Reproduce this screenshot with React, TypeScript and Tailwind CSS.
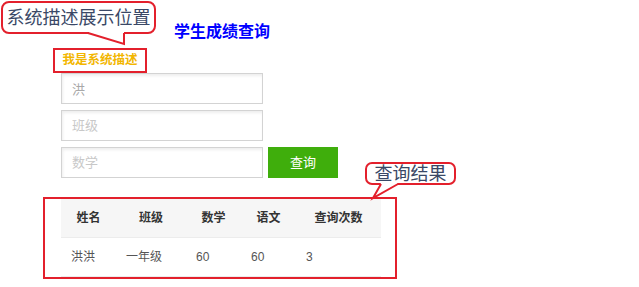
export default function App() {
  const cols = [
    { name: '姓名', w: 'w-[55px]' },
    { name: '班级', w: 'w-[70px]' },
    { name: '数学', w: 'w-[55px]' },
    { name: '语文', w: 'w-[55px]' },
    { name: '查询次数', w: 'w-[85px]' },
  ];
  const row = ['洪洪', '一年级', '60', '60', '3'];

  return (
    <div
      className="relative w-[639px] h-[287px] overflow-hidden bg-white"
      style={{ fontFamily: '"Liberation Sans", "Noto Sans CJK SC", sans-serif' }}
    >
      <div className="pt-[22px]">
        {/* page title */}
        <h1 className="ml-[174px] text-[16px] leading-[20px] font-bold text-[#0000ff]">学生成绩查询</h1>

        {/* system description (annotated) */}
        <div className="mt-[6px] ml-[53px] w-[94px] h-[25px] border-2 border-[#e3202c] flex items-center justify-center">
          <span className="text-[12.5px] leading-none font-bold text-[#f2b600]">我是系统描述</span>
        </div>

        {/* query form */}
        <div className="ml-[61px] flex flex-col gap-[6px]">
          <input
            defaultValue="洪"
            className="w-[202px] h-[31px] border border-[#d3d3d3] px-[10px] text-[13px] text-[#a8a8a8] outline-none shadow-[inset_1px_2px_3px_rgba(0,0,0,0.07)]"
          />
          <input
            placeholder="班级"
            className="w-[202px] h-[31px] border border-[#d3d3d3] px-[10px] text-[13px] placeholder:text-[#c8c8c8] outline-none shadow-[inset_1px_2px_3px_rgba(0,0,0,0.07)]"
          />
          <div className="flex">
            <input
              placeholder="数学"
              className="w-[202px] h-[31px] border border-[#d3d3d3] px-[10px] text-[13px] placeholder:text-[#c8c8c8] outline-none shadow-[inset_1px_2px_3px_rgba(0,0,0,0.07)]"
            />
            <button className="ml-[5px] w-[70px] h-[31px] bg-[#3fae0c] text-white text-[13px]">查询</button>
          </div>
        </div>

        {/* query result (annotated) */}
        <div className="mt-[19px] ml-[43px] w-[354px] h-[82px] border-2 border-[#e3202c] pl-[16px]">
          <table className="w-[320px] border-collapse text-[12px] table-fixed">
            <thead>
              <tr className="bg-[#f6f6f6] h-[38px] border-b border-[#ececec]">
                {cols.map((c) => (
                  <th key={c.name} className={`${c.w} font-bold text-[#333] text-center`}>
                    {c.name}
                  </th>
                ))}
              </tr>
            </thead>
            <tbody>
              <tr className="h-[39px] border-b border-[#ececec]">
                {row.map((v, i) => (
                  <td key={i} className="pl-[10px] text-[#555] text-left">
                    {v}
                  </td>
                ))}
              </tr>
            </tbody>
          </table>
        </div>
      </div>

      {/* callout: description position */}
      <div className="absolute left-[1px] top-[1px] w-[155px] h-[33px] border-2 border-[#e3202c] rounded-[8px] bg-white flex items-center justify-center">
        <span className="text-[18px] leading-none text-[#3a4866]">系统描述展示位置</span>
      </div>
      <svg className="absolute left-0 top-0" width="160" height="50">
        <path d="M88 30 L124 44 L124 30 Z" fill="white" />
        <rect x="89" y="30" width="34" height="4" fill="white" />
        <polyline points="88,33 124,44 124,33" fill="none" stroke="#e3202c" strokeWidth="2" />
      </svg>

      {/* callout: query result */}
      <div className="absolute left-[365px] top-[162px] w-[91px] h-[23px] border-2 border-[#e3202c] rounded-[7px] bg-white flex items-center justify-center">
        <span className="text-[18px] leading-none text-[#3a4866]">查询结果</span>
      </div>
      <svg className="absolute left-[360px] top-[175px]" width="50" height="30">
        <path d="M21 8 L13 23 L38 8 Z" fill="white" />
        <rect x="22" y="6" width="15" height="4" fill="white" />
        <polyline points="21,9 13,23 38,9" fill="none" stroke="#e3202c" strokeWidth="2" />
      </svg>
    </div>
  );
}
